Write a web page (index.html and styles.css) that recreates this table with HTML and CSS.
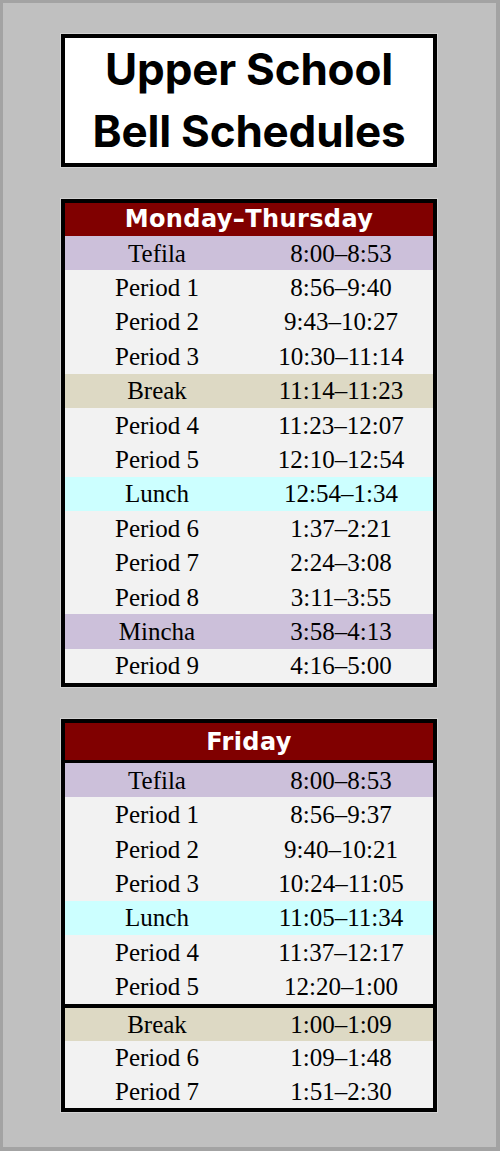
FILE: index.html
```html
<!DOCTYPE html>
<html>
<head>
<meta charset="utf-8">
<link rel="stylesheet" href="styles.css">
</head>
<body>
<div class="frame">
  <div class="title">Upper School<br>Bell Schedules</div>

  <div class="sched">
    <div class="head">Monday–Thursday</div>
    <div class="row lilac"><span>Tefila</span><span>8:00–8:53</span></div>
    <div class="row"><span>Period 1</span><span>8:56–9:40</span></div>
    <div class="row"><span>Period 2</span><span>9:43–10:27</span></div>
    <div class="row"><span>Period 3</span><span>10:30–11:14</span></div>
    <div class="row tan"><span>Break</span><span>11:14–11:23</span></div>
    <div class="row"><span>Period 4</span><span>11:23–12:07</span></div>
    <div class="row"><span>Period 5</span><span>12:10–12:54</span></div>
    <div class="row cyan"><span>Lunch</span><span>12:54–1:34</span></div>
    <div class="row"><span>Period 6</span><span>1:37–2:21</span></div>
    <div class="row"><span>Period 7</span><span>2:24–3:08</span></div>
    <div class="row"><span>Period 8</span><span>3:11–3:55</span></div>
    <div class="row lilac"><span>Mincha</span><span>3:58–4:13</span></div>
    <div class="row"><span>Period 9</span><span>4:16–5:00</span></div>
  </div>

  <div class="sched friday">
    <div class="head">Friday</div>
    <div class="row lilac"><span>Tefila</span><span>8:00–8:53</span></div>
    <div class="row"><span>Period 1</span><span>8:56–9:37</span></div>
    <div class="row"><span>Period 2</span><span>9:40–10:21</span></div>
    <div class="row"><span>Period 3</span><span>10:24–11:05</span></div>
    <div class="row cyan"><span>Lunch</span><span>11:05–11:34</span></div>
    <div class="row"><span>Period 4</span><span>11:37–12:17</span></div>
    <div class="row"><span>Period 5</span><span>12:20–1:00</span></div>
    <div class="row tan sep"><span>Break</span><span>1:00–1:09</span></div>
    <div class="row short"><span>Period 6</span><span>1:09–1:48</span></div>
    <div class="row short"><span>Period 7</span><span>1:51–2:30</span></div>
  </div>
</div>
</body>
</html>
```

FILE: styles.css
```css
html, body {
  margin: 0;
  padding: 0;
}

.frame {
  box-sizing: border-box;
  width: 500px;
  height: 1151px;
  background: #c0c0c0;
  border-style: solid;
  border-color: #a3a3a3;
  border-width: 3px 4px 4px 3px;
  padding: 31px 0 0 58px;
}

.title {
  box-sizing: border-box;
  width: 376px;
  height: 133px;
  border: 4px solid #000;
  outline: 1px solid #d2d2d2;
  background: #fff;
  font-family: Inter, "Noto Sans", sans-serif;
  font-weight: 700;
  font-size: 44px;
  line-height: 62px;
  text-align: center;
  color: #000;
  letter-spacing: -0.2px;
}

.sched {
  box-sizing: border-box;
  width: 376px;
  margin-top: 32px;
  border: 4px solid #000;
  outline: 1px solid #d2d2d2;
  background: #f2f2f2;
}

.head {
  height: 33px;
  background: #800000;
  color: #fff;
  font-family: "DejaVu Sans", Verdana, sans-serif;
  font-weight: 700;
  font-size: 24px;
  letter-spacing: 0.4px;
  line-height: 33px;
  text-align: center;
}

.friday .head {
  height: 37px;
  line-height: 38px;
  border-bottom: 3px solid #000;
}

.row {
  display: grid;
  grid-template-columns: 1fr 1fr;
  height: 34.4px;
  align-items: center;
  background: #f2f2f2;
  font-family: "Liberation Serif", "Times New Roman", serif;
  font-size: 25px;
  color: #000;
  text-align: center;
}

.row span {
  line-height: 1;
}

.lilac { background: #ccc0da; }
.tan { background: #ddd9c4; }
.cyan { background: #ccffff; }

.sep {
  border-top: 4px solid #000;
  height: 33.4px;
}

.short {
  height: 33.4px;
}
```
